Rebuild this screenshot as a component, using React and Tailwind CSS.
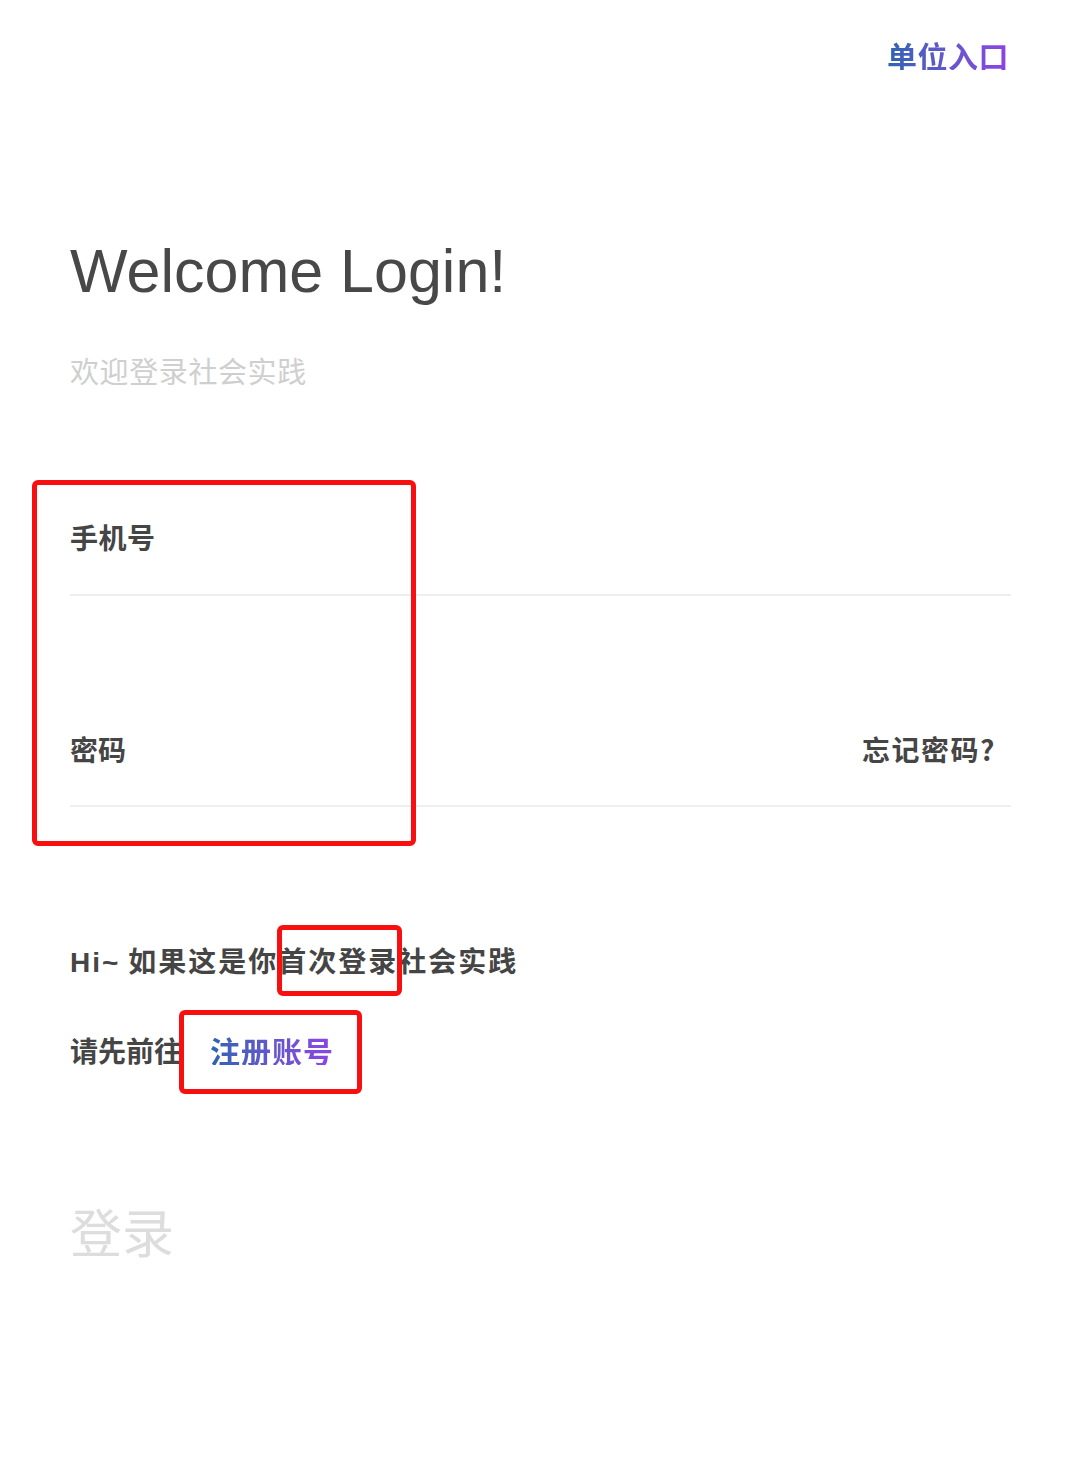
import React from "react";

const cjk = { fontFamily: '"Noto Sans CJK SC", "Noto Sans", sans-serif' };
const latin = { fontFamily: '"Liberation Sans", Arial, sans-serif' };

export default function App() {
  return (
    <div className="relative w-full min-h-[1459px] bg-white text-[#454545]" style={cjk}>
      <div className="flex justify-end pt-[40px] pr-[71px]">
        <span className="text-[30px] leading-none font-bold tracking-[0.5px] bg-gradient-to-r from-[#2b63b3] to-[#8c42e6] bg-clip-text text-transparent">
          单位入口
        </span>
      </div>

      <div className="flex flex-col pl-[70px] pr-[69px]">
        <h1 className="mt-[171px] text-[61px] leading-none text-[#484848]" style={latin}>
          Welcome Login!
        </h1>
        <p className="mt-[54px] text-[29px] leading-none tracking-[0.6px] text-[#cfcfcf]">欢迎登录社会实践</p>

        <div className="mt-[138px] text-[28px] leading-none font-bold tracking-[0.5px]">手机号</div>
        <div className="mt-[43px] h-[2px] bg-[#eeeeee]" />

        <div className="mt-[139px] flex items-center justify-between pr-[15px] text-[28px] leading-none font-bold">
          <span>密码</span>
          <span className="tracking-[1.5px]">忘记密码?</span>
        </div>
        <div className="mt-[42px] h-[2px] bg-[#eeeeee]" />

        <div className="mt-[139px] text-[28px] leading-none font-bold tracking-[2px]">
          <span className="mr-[8px]" style={latin}>Hi~</span>如果这是你首次登录社会实践
        </div>

        <div className="mt-[58px] flex items-center">
          <span className="text-[28px] leading-none font-bold">请先前往</span>
          <span className="ml-[28px] text-[30px] leading-none font-bold tracking-[1px] bg-gradient-to-r from-[#2b63b3] to-[#8c42e6] bg-clip-text text-transparent">
            注册账号
          </span>
        </div>

        <div className="mt-[140px] text-[52px] leading-none text-[#dddddd]">登录</div>
      </div>

      <div className="absolute left-[32px] top-[480px] w-[384px] h-[366px] border-[5px] border-[#f80f0f] rounded-[6px]" />
      <div className="absolute left-[277px] top-[925px] w-[125px] h-[71px] border-[5px] border-[#f80f0f] rounded-[6px]" />
      <div className="absolute left-[179px] top-[1010px] w-[183px] h-[84px] border-[5px] border-[#f80f0f] rounded-[6px]" />
    </div>
  );
}
